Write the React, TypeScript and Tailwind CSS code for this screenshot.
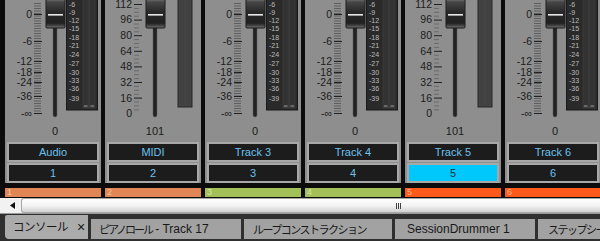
import React from "react";

type Kind = "db" | "midi";

interface StripData {
  kind: Kind;
  value: string;
  name: string;
  num: string;
  bar: string;
  barText: string;
  selected?: boolean;
}

const STRIPS: StripData[] = [
  { kind: "db", value: "0", name: "Audio", num: "1", bar: "bg-[#e08656]", barText: "text-[#f6c2a2]" },
  { kind: "midi", value: "101", name: "MIDI", num: "2", bar: "bg-[#e08656]", barText: "text-[#f6c2a2]" },
  { kind: "db", value: "0", name: "Track 3", num: "3", bar: "bg-[#a2bf58]", barText: "text-[#d6e6a8]" },
  { kind: "db", value: "0", name: "Track 4", num: "4", bar: "bg-[#a2bf58]", barText: "text-[#d6e6a8]" },
  { kind: "midi", value: "101", name: "Track 5", num: "5", bar: "bg-[#fb5a1a]", barText: "text-[#ffb08c]", selected: true },
  { kind: "db", value: "0", name: "Track 6", num: "6", bar: "bg-[#fb5a1a]", barText: "text-[#ffb08c]" },
];

const DB_LABELS: [string, number][] = [
  ["0", 14], ["-6", 41], ["-12", 61], ["-18", 72], ["-24", 82], ["-36", 96], ["-∞", 113],
];
const MIDI_LABELS: [string, number][] = [
  ["112", 4], ["96", 19], ["80", 35], ["64", 51], ["48", 66], ["32", 82], ["16", 98], ["0", 113],
];
const METER_LABELS: [string, number][] = [
  ["-6", 4], ["-9", 12], ["-12", 20], ["-15", 28], ["-18", 37], ["-21", 45],
  ["-24", 54], ["-27", 63], ["-30", 72], ["-33", 80], ["-36", 88], ["-39", 98],
];

function range(from: number, to: number, step: number) {
  const out: number[] = [];
  for (let v = from; v <= to; v += step) out.push(v);
  return out;
}

function Fader({ kind, id }: { kind: Kind; id: number }) {
  const labels = kind === "db" ? DB_LABELS : MIDI_LABELS;
  return (
    <svg width="96" height="122" viewBox="0 0 96 122" className="block">
      <defs>
        <linearGradient id={`knob${id}`} x1="0" y1="0" x2="0" y2="1">
          <stop offset="0" stopColor="#a0a0a0" />
          <stop offset="0.18" stopColor="#4c4c4c" />
          <stop offset="0.5" stopColor="#2c2c2c" />
          <stop offset="0.85" stopColor="#242424" />
          <stop offset="1" stopColor="#707070" />
        </linearGradient>
      </defs>

      {/* scale ticks */}
      {kind === "db"
        ? range(3, 113, 2.5).map((y) => (
            <line key={y} x1="29" x2="36" y1={y + 0.5} y2={y + 0.5} stroke="#4e4e4e" strokeWidth="1" opacity="0.75" />
          ))
        : range(4, 113, 3.9).map((y, i) => (
            <line
              key={y}
              x1="29"
              x2={i % 4 === 0 ? 37 : 34}
              y1={y + 0.5}
              y2={y + 0.5}
              stroke={i % 4 === 0 ? "#202020" : "#6a6a6a"}
              strokeWidth="1"
            />
          ))}
      {kind === "db" &&
        DB_LABELS.map(([, y]) => (
          <line key={y} x1="29" x2="37" y1={y + 0.5} y2={y + 0.5} stroke="#222" strokeWidth="1" />
        ))}

      {labels.map(([t, y]) => (
        <text key={t} x="27" y={y + 4} textAnchor="end" fontFamily="Liberation Sans, Arial, sans-serif" fontSize="10.5" fill="#1c1c1c">
          {t}
        </text>
      ))}

      {/* slot */}
      <rect x="48" y="20" width="4" height="97" rx="2" fill="#222" stroke="#5c5c5c" strokeWidth="0.5" />

      {/* knob */}
      <rect x="41" y="-4" width="19" height="32" rx="1" fill={`url(#knob${id})`} stroke="#1a1a1a" strokeWidth="1" />
      {range(3, 25, 2).map((y) => (
        <line key={y} x1="42" x2="59" y1={y} y2={y} stroke="#000" strokeWidth="0.5" opacity="0.25" />
      ))}
      <rect x="43" y="14" width="15" height="1.6" fill="#e8e8e8" />

      {/* meter */}
      {kind === "db" ? (
        <g>
          <rect x="61.5" y="-1" width="31" height="111" fill="#2a2a2a" stroke="#1a1a1a" />
          {METER_LABELS.map(([t, y]) => (
            <text key={t} x="64" y={y + 2.5} fontFamily="Liberation Sans, Arial, sans-serif" fontSize="7" fill="#bcbcbc">
              {t}
            </text>
          ))}
          {[78, 84.5].map((x) => (
            <g key={x}>
              <rect x={x} y="-1" width="5.5" height="109" fill="#383838" stroke="#4a4a4a" strokeWidth="0.5" />
              {range(1, 106, 2).map((y) => (
                <line key={y} x1={x} x2={x + 5.5} y1={y} y2={y} stroke="#2c2c2c" strokeWidth="0.7" />
              ))}
              <rect x={x + 1} y="105.5" width="3.5" height="1" fill="#9a9a9a" />
            </g>
          ))}
        </g>
      ) : (
        <g>
          <rect x="73" y="-1" width="14" height="108" fill="#2e2e2e" stroke="#262626" />
          {[74, 80.5].map((x) => (
            <g key={x}>
              <rect x={x} y="-1" width="5.5" height="107" fill="#464646" stroke="#555" strokeWidth="0.5" />
              {range(1, 105, 2).map((y) => (
                <line key={y} x1={x} x2={x + 5.5} y1={y} y2={y} stroke="#3a3a3a" strokeWidth="0.7" />
              ))}
            </g>
          ))}
        </g>
      )}
    </svg>
  );
}

function Strip({ s, i }: { s: StripData; i: number }) {
  return (
    <div className="w-[100px] h-[183px] border-l-4 border-[#0c0c0c] bg-[#8e8e8e] flex flex-col shrink-0">
      <Fader kind={s.kind} id={i} />
      <div className="h-[18px] pl-[4px] flex items-center justify-center text-[11px] leading-none text-[#1a1a1a] font-['Liberation_Sans',Arial,sans-serif]">
        {s.value}
      </div>
      <div className="flex flex-col gap-px pt-[2px] px-[2px] font-['Liberation_Sans',Arial,sans-serif] text-[11px] leading-none">
        <div className="h-[20px] border-2 border-[#a8a8a8] bg-[#1c1c1c] flex items-center justify-center text-[#6cc0ee]">
          {s.name}
        </div>
        <div
          className={
            s.selected
              ? "h-[20px] border-2 border-[#a8a8a8] bg-[#00c8fc] flex items-center justify-center text-[#10303f]"
              : "h-[20px] border-2 border-[#a8a8a8] bg-[#1c1c1c] flex items-center justify-center text-[#6cc0ee]"
          }
        >
          {s.num}
        </div>
      </div>
    </div>
  );
}

export default function App() {
  return (
    <div className="w-[600px] h-[241px] bg-[#0c0c0c] overflow-hidden flex flex-col">
      <div className="flex pl-px h-[188px]">
        {STRIPS.map((s, i) => (
          <Strip key={i} s={s} i={i} />
        ))}
      </div>

      {/* track colour bars */}
      <div className="flex pl-px h-[9px]">
        {STRIPS.map((s, i) => (
          <div key={i} className="w-[100px] shrink-0 border-l-4 border-[#0c0c0c] flex">
            <div className={`flex-1 ${s.bar} ${s.barText} text-[9px] leading-[9px] pl-[2px] font-['Liberation_Sans',Arial,sans-serif] overflow-hidden`}>
              {s.num}
            </div>
          </div>
        ))}
      </div>

      {/* scrollbar */}
      <div className="mt-px h-[16px] bg-[#f2f2f2] flex items-stretch border-b border-[#9a9a9a]">
        <div className="w-[20px] flex items-center justify-center pl-[4px]">
          <svg width="5" height="7" viewBox="0 0 5 7">
            <polygon points="5,0 5,7 0,3.5" fill="#111" />
          </svg>
        </div>
        <div className="flex-1 ml-px rounded-l-[3px] border border-r-0 border-[#a6a6a6] bg-gradient-to-b from-[#ffffff] via-[#f4f4f4] to-[#d2d2d2] flex items-center">
          <div className="ml-[374px] flex gap-px">
            <div className="w-px h-[6px] bg-[#444]" />
            <div className="w-px h-[6px] bg-[#444]" />
            <div className="w-px h-[6px] bg-[#444]" />
          </div>
        </div>
      </div>

      {/* tabs */}
      <div className="flex-1 bg-[#2f2f2f] flex items-start pl-[5px] gap-[3px] pt-[1px] font-['Liberation_Sans','Noto_Sans_CJK_JP',sans-serif] text-[12px] text-[#181818]">
        <div className="w-[83px] h-[24px] shrink-0 bg-[#ababab] rounded-bl-[4px] rounded-tl-[2px] flex items-center pl-[8px] gap-[9px]">
          <span className="font-['Noto_Sans_CJK_JP',sans-serif] text-[11.5px] tracking-[-0.5px]">コンソール</span>
          <span className="text-[14px] leading-none">×</span>
        </div>
        <div className="w-[150px] h-[20px] mt-[4px] shrink-0 bg-[#a2a2a2] flex items-center pl-[8px] whitespace-nowrap">
          <span className="font-['Noto_Sans_CJK_JP',sans-serif] text-[11px] tracking-[-2px]">ピアノロール</span>
          <span>&nbsp;- Track 17</span>
        </div>
        <div className="w-[148px] h-[20px] mt-[4px] shrink-0 bg-[#a2a2a2] flex items-center pl-[9px] whitespace-nowrap">
          <span className="font-['Noto_Sans_CJK_JP',sans-serif] text-[11px] tracking-[-1.5px]">ループコンストラクション</span>
        </div>
        <div className="w-[140px] h-[20px] mt-[4px] shrink-0 bg-[#a2a2a2] flex items-center pl-[12px] whitespace-nowrap">
          SessionDrummer 1
        </div>
        <div className="w-[140px] h-[20px] mt-[4px] shrink-0 bg-[#a2a2a2] flex items-center pl-[10px] whitespace-nowrap">
          <span className="font-['Noto_Sans_CJK_JP',sans-serif] text-[11px] tracking-[-1.5px]">ステップシーケンサー</span>
        </div>
      </div>
    </div>
  );
}
